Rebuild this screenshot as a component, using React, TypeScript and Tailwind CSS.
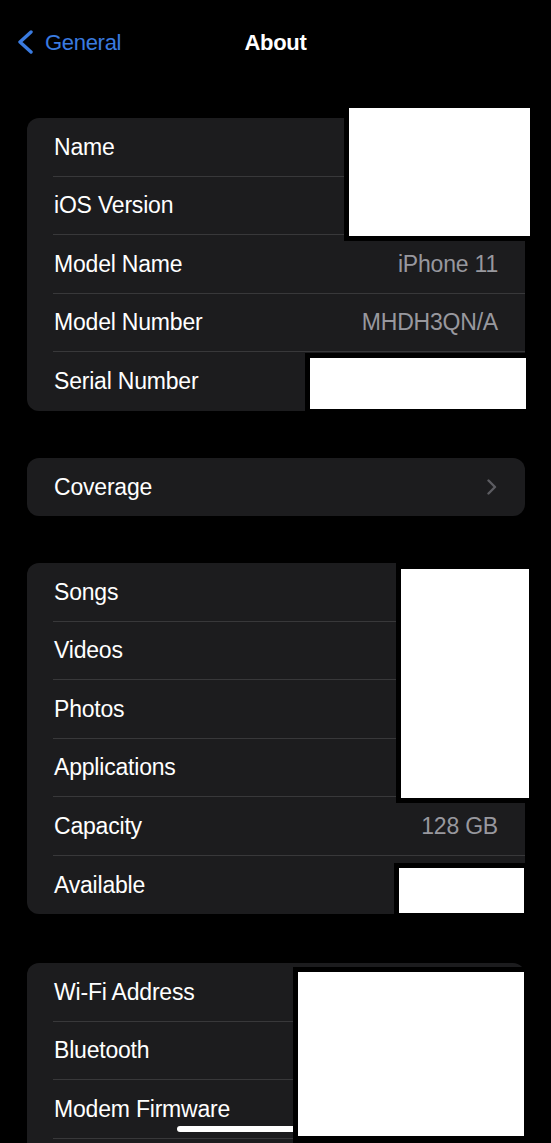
import React from "react";

interface RowItem {
  label: string;
  value?: string;
  chevron?: boolean;
}

const aboutRows: RowItem[] = [
  { label: "Name" },
  { label: "iOS Version" },
  { label: "Model Name", value: "iPhone 11" },
  { label: "Model Number", value: "MHDH3QN/A" },
  { label: "Serial Number" },
];

const mediaRows: RowItem[] = [
  { label: "Songs" },
  { label: "Videos" },
  { label: "Photos" },
  { label: "Applications" },
  { label: "Capacity", value: "128 GB" },
  { label: "Available" },
];

// last row sits below the fold, only its top edge shows
const networkRows: RowItem[] = [
  { label: "Wi-Fi Address" },
  { label: "Bluetooth" },
  { label: "Modem Firmware" },
  { label: "" },
];

function Row({ item, last }: { item: RowItem; last: boolean }) {
  return (
    <div className="flex h-[58.5px] pl-[26px]">
      <div
        className={`flex flex-1 items-center justify-between pl-px pr-[27px] ${
          last ? "" : "border-b border-[#38383a]"
        }`}
      >
        <span className="text-[23px] tracking-[-0.2px] text-white">{item.label}</span>
        {item.value && (
          <span className="text-[23px] tracking-[-0.2px] text-[#98989e]">{item.value}</span>
        )}
        {item.chevron && (
          <svg width="10" height="16" viewBox="0 0 10 16" fill="none" className="mr-px">
            <polyline
              points="1.5,1.5 8,8 1.5,14.5"
              stroke="#5c5c61"
              strokeWidth="2.4"
              strokeLinecap="round"
              strokeLinejoin="round"
            />
          </svg>
        )}
      </div>
    </div>
  );
}

function Group({ rows, className }: { rows: RowItem[]; className?: string }) {
  return (
    <div className={`ml-[27px] mr-[26px] overflow-hidden rounded-[12px] bg-[#1c1c1e] ${className ?? ""}`}>
      {rows.map((r, i) => (
        <Row key={i} item={r} last={i === rows.length - 1} />
      ))}
    </div>
  );
}

export default function App() {
  return (
    <div
      className="relative h-[1143px] w-[551px] overflow-hidden bg-black"
      style={{ fontFamily: '"Liberation Sans", Arial, sans-serif' }}
    >
      {/* nav bar */}
      <div className="grid h-[84px] grid-cols-3 items-center">
        <div className="flex items-center pl-[17px]">
          <svg width="16" height="24" viewBox="0 0 16 24" fill="none">
            <polyline
              points="14,2 3,12 14,22"
              stroke="#3a7be0"
              strokeWidth="3.4"
              strokeLinecap="round"
              strokeLinejoin="round"
            />
          </svg>
          <span className="ml-[12px] text-[22px] tracking-[-0.3px] text-[#3a7be0]">General</span>
        </div>
        <span className="text-center text-[22px] font-bold tracking-[-0.3px] text-white">About</span>
        <div />
      </div>

      <Group rows={aboutRows} className="mt-[34px]" />

      <div className="ml-[27px] mr-[26px] mt-[47px] rounded-[12px] bg-[#1c1c1e]">
        <Row item={{ label: "Coverage", chevron: true }} last />
      </div>

      <Group rows={mediaRows} className="mt-[47px]" />

      <Group rows={networkRows} className="mt-[49px]" />

      {/* home indicator */}
      <div className="absolute left-[177px] top-[1126px] h-[6px] w-[196px] rounded-full bg-white" />

      {/* redaction boxes */}
      <div className="absolute left-[344px] top-[105px] h-[136px] w-[191px] border-b-[5px] border-l-[5px] border-r-[5px] border-t-[3px] border-black bg-white" />
      <div className="absolute left-[305px] top-[353px] h-[61px] w-[226px] border-[5px] border-black bg-white" />
      <div className="absolute left-[396px] top-[563px] h-[240px] w-[138px] border-b-[5px] border-l-[5px] border-r-[5px] border-t-[6px] border-black bg-white" />
      <div className="absolute left-[394px] top-[863px] h-[55px] w-[135px] border-[5px] border-black bg-white" />
      <div className="absolute left-[293px] top-[967px] h-[176px] w-[236px] border-b-[7px] border-l-[5px] border-r-[5px] border-t-[5px] border-black bg-white" />
    </div>
  );
}
